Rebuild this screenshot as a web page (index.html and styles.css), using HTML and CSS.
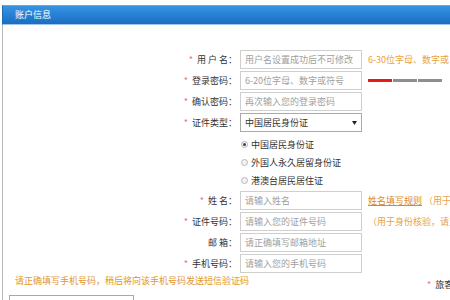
FILE: index.html
```html
<!DOCTYPE html>
<html lang="zh-CN">
<head>
<meta charset="utf-8">
<title>账户信息</title>
<link rel="stylesheet" href="styles.css">
</head>
<body>
<div class="panel">
  <div class="panel-head">账户信息</div>
  <div class="panel-body">
    <div class="row">
      <label class="lbl"><span class="star">*</span>用 户 名：</label>
      <div class="input ph">用户名设置成功后不可修改</div>
      <span class="hint">6-30位字母、数字或“_”，字母开头</span>
    </div>
    <div class="row">
      <label class="lbl"><span class="star">*</span>登录密码：</label>
      <div class="input ph">6-20位字母、数字或符号</div>
      <div class="strength"><span class="seg red"></span><span class="seg"></span><span class="seg"></span></div>
    </div>
    <div class="row">
      <label class="lbl"><span class="star">*</span>确认密码：</label>
      <div class="input ph">再次输入您的登录密码</div>
    </div>
    <div class="row">
      <label class="lbl"><span class="star">*</span>证件类型：</label>
      <div class="input select"><span>中国居民身份证</span>
        <svg class="arrow" width="5" height="4" viewBox="0 0 5 4"><path d="M0 0H5L2.5 4Z" fill="#222"/></svg>
      </div>
    </div>
    <div class="radios">
      <div class="radio on"><span class="dot"></span>中国居民身份证</div>
      <div class="radio"><span class="dot"></span>外国人永久居留身份证</div>
      <div class="radio"><span class="dot"></span>港澳台居民居住证</div>
    </div>
    <div class="row">
      <label class="lbl"><span class="star">*</span>姓 名：</label>
      <div class="input ph">请输入姓名</div>
      <span class="hint"><a class="link">姓名填写规则</a> <span class="paren">（用于身份核验，请正确填写）</span></span>
    </div>
    <div class="row">
      <label class="lbl"><span class="star">*</span>证件号码：</label>
      <div class="input ph">请输入您的证件号码</div>
      <span class="hint paren">（用于身份核验，请正确填写）</span>
    </div>
    <div class="row">
      <label class="lbl">邮 箱：</label>
      <div class="input ph">请正确填写邮箱地址</div>
    </div>
    <div class="row">
      <label class="lbl"><span class="star">*</span>手机号码：</label>
      <div class="input ph">请输入您的手机号码</div>
    </div>
    <div class="tipline">
      <span class="tip">请正确填写手机号码，稍后将向该手机号码发送短信验证码</span>
      <span class="psg"><span class="star">*</span>旅客类型：</span>
    </div>
    <div class="box"></div>
  </div>
</div>
</body>
</html>
```

FILE: styles.css
```css
html, body {
  margin: 0;
  padding: 0;
  overflow: hidden;
  background: #fff;
}
body {
  font-family: "Noto Sans CJK SC", "Noto Sans", sans-serif;
  font-size: 9px;
  color: #333;
  width: 450px;
  height: 300px;
}
.panel {
  margin: 5px 0 0 2px;
  width: 760px;
}
.panel-head {
  height: 18px;
  line-height: 18px;
  border-top: 1px solid #6aa5dc;
  border-bottom: 1px solid #9ec6ea;
  background: linear-gradient(#3594e4, #1a6dc2);
  color: #fff;
  padding-left: 12px;
  border-left: 1px solid #1f6bb5;
}
.panel-body {
  border-left: 1px solid #b9b9b9;
  padding-top: 25px;
  height: 400px;
}
.row {
  display: flex;
  align-items: center;
  height: 19px;
  margin-bottom: 2px;
}
.lbl {
  width: 234px;
  margin-right: 3px;
  text-align: right;
  white-space: pre;
  color: #333;
  line-height: 19px;
}
.star {
  color: #f26d6d;
  margin-right: 4px;
}
.input {
  box-sizing: border-box;
  width: 122px;
  height: 19px;
  border: 1px solid #cfcfcf;
  padding-left: 4px;
  line-height: 17px;
  white-space: nowrap;
  overflow: hidden;
}
.ph {
  color: #a0a0a0;
}
.select {
  display: flex;
  align-items: center;
  justify-content: space-between;
  padding-right: 4px;
  border-color: #aaa;
  color: #333;
}
.hint {
  margin-left: 6px;
  color: #eba23c;
  white-space: nowrap;
}
.link {
  color: #d98a22;
  text-decoration: underline;
}
.paren {
  color: #e8a14a;
}
.strength {
  margin-left: 6px;
  display: flex;
  gap: 1px;
}
.seg {
  width: 24px;
  height: 3px;
  background: #8e8e8e;
}
.seg.red {
  background: #e31b1b;
}
.radios {
  margin: 3px 0 2px 238px;
}
.radio {
  display: flex;
  align-items: center;
  height: 18px;
  color: #333;
}
.dot {
  box-sizing: border-box;
  width: 7px;
  height: 7px;
  border-radius: 50%;
  border: 1px solid #b8b8b8;
  background: #f2f2f2;
  margin-right: 3px;
  display: flex;
  align-items: center;
  justify-content: center;
}
.radio.on .dot::after {
  content: "";
  width: 3px;
  height: 3px;
  border-radius: 50%;
  background: #444;
}
.tipline {
  display: grid;
  grid-template-columns: 412px auto;
  height: 16px;
  padding-left: 12px;
}
.tip {
  color: #e0962e;
  line-height: 12px;
  white-space: nowrap;
}
.psg {
  align-self: end;
  line-height: 12px;
  white-space: nowrap;
}
.box {
  margin: 4px 0 0 6px;
  width: 123px;
  height: 20px;
  border: 1px solid #a8a8a8;
}
```
